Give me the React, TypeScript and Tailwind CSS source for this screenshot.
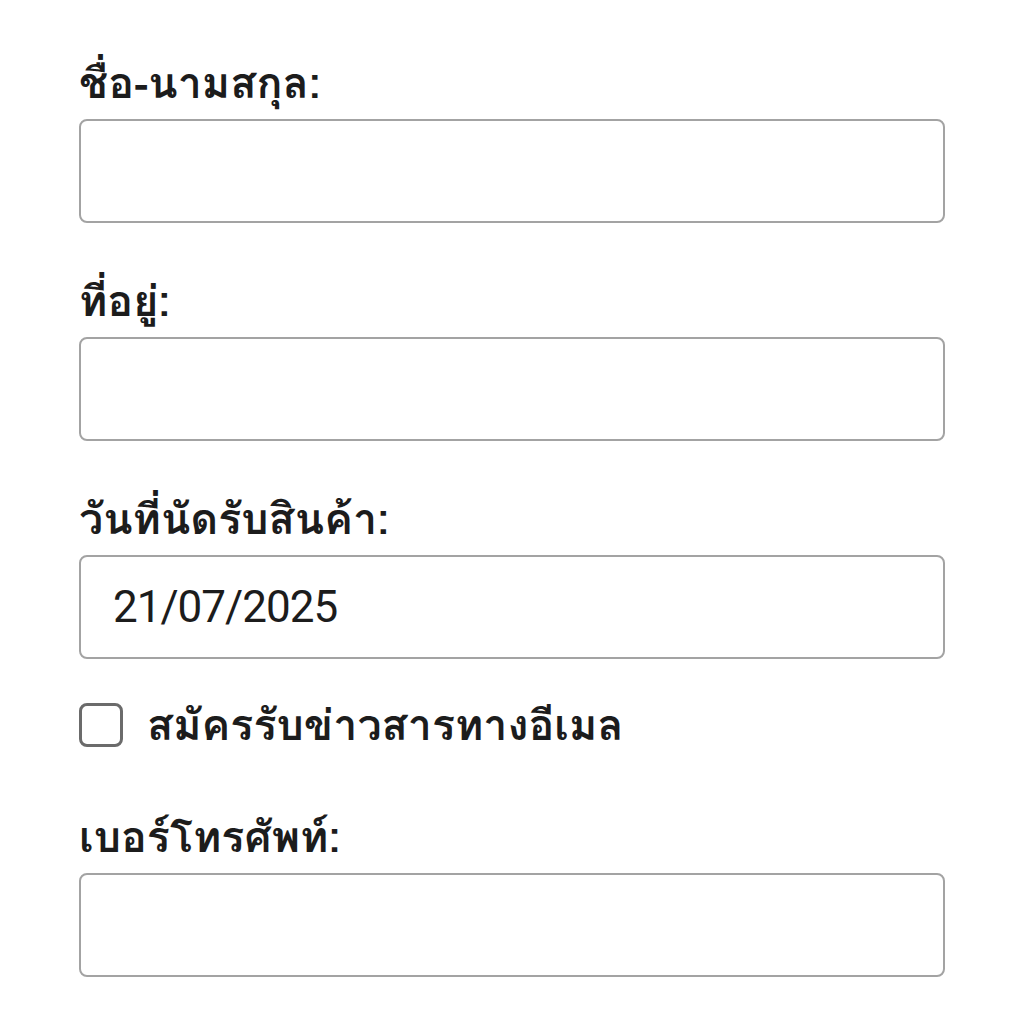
import { useState } from "react";

function Field({ label, value }: { label: string; value?: string }) {
  return (
    <div className="flex flex-col">
      <label className="mb-[8px] font-['Loma','Liberation_Sans',sans-serif] text-[43px] leading-[56px] font-bold text-[#1c1c1c]">
        {label}
      </label>
      <input
        defaultValue={value}
        className="h-[104px] w-full rounded-[8px] border-2 border-[#a3a3a3] bg-white px-[32px] font-['Roboto',sans-serif] text-[44px] tracking-[-1px] text-[#1c1c1c] outline-none"
      />
    </div>
  );
}

export default function App() {
  const [checked, setChecked] = useState(false);
  return (
    <div className="min-h-screen w-[1024px] bg-white px-[79px] pt-[55px]">
      <div className="flex flex-col gap-[50px]">
        <Field label="ชื่อ-นามสกุล:" />
        <Field label="ที่อยู่:" />
        <Field label="วันที่นัดรับสินค้า:" value="21/07/2025" />
      </div>
      <label className="mt-[38px] flex cursor-pointer items-center gap-[24px]">
        <span
          onClick={() => setChecked(!checked)}
          className="h-[44px] w-[44px] rounded-[8px] border-[3px] border-[#6b6b6b] bg-white"
        />
        <span className="font-['Loma','Liberation_Sans',sans-serif] text-[43px] leading-[56px] font-bold text-[#1c1c1c]">
          สมัครรับข่าวสารทางอีเมล
        </span>
      </label>
      <div className="mt-[56px]">
        <Field label="เบอร์โทรศัพท์:" />
      </div>
    </div>
  );
}
